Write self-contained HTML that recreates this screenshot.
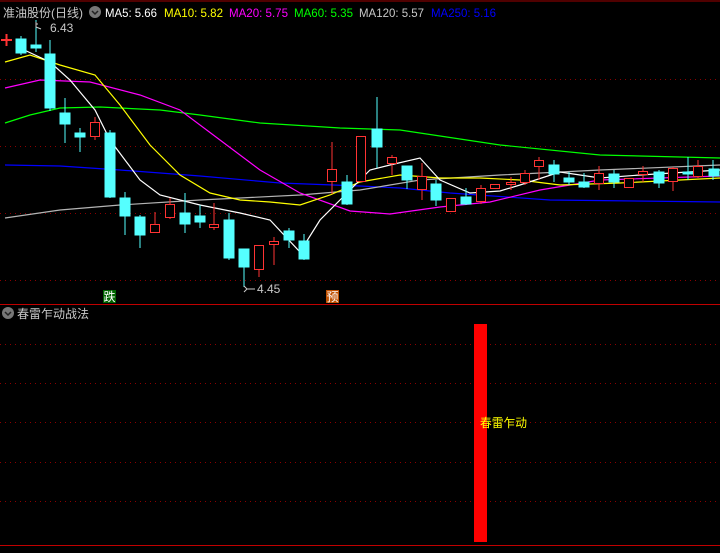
<!DOCTYPE html>
<html><head><meta charset="utf-8"><style>
body{margin:0;background:#000;width:720px;height:548px;overflow:hidden;font-family:"Liberation Sans","Noto Sans CJK SC",sans-serif}
svg text{font-family:"Liberation Sans","Noto Sans CJK SC",sans-serif}
</style></head><body>
<svg width="720" height="548" xmlns="http://www.w3.org/2000/svg">
<rect width="720" height="548" fill="#000"/>
<line x1="0" y1="1" x2="720" y2="1" stroke="#a00000" stroke-width="1"/>
<g stroke="#8b0000" stroke-dasharray="1,4" stroke-width="1">
<line x1="0" y1="79.5" x2="720" y2="79.5"/><line x1="0" y1="146.5" x2="720" y2="146.5"/>
<line x1="0" y1="213.5" x2="720" y2="213.5"/><line x1="0" y1="280.5" x2="720" y2="280.5"/>
<line x1="0" y1="344.5" x2="720" y2="344.5"/><line x1="0" y1="383.5" x2="720" y2="383.5"/>
<line x1="0" y1="422.5" x2="720" y2="422.5"/><line x1="0" y1="462.5" x2="720" y2="462.5"/>
<line x1="0" y1="501.5" x2="720" y2="501.5"/>
</g>
<line x1="0" y1="304.5" x2="720" y2="304.5" stroke="#c00000"/>
<line x1="0" y1="545.5" x2="720" y2="545.5" stroke="#c00000"/>
<!-- header -->
<text x="3" y="17" fill="#c8c8c8" font-size="12" textLength="80" lengthAdjust="spacingAndGlyphs">准油股份(日线)</text>
<circle cx="95" cy="12" r="6" fill="#777"/><path d="M92 11l3 3 3-3" stroke="#222" stroke-width="1.5" fill="none"/>
<text x="105" y="17" font-size="12" fill="#fff" textLength="52" lengthAdjust="spacingAndGlyphs">MA5: 5.66</text>
<text x="164" y="17" font-size="12" fill="#ff0" textLength="59" lengthAdjust="spacingAndGlyphs">MA10: 5.82</text>
<text x="229" y="17" font-size="12" fill="#f0f" textLength="59" lengthAdjust="spacingAndGlyphs">MA20: 5.75</text>
<text x="294" y="17" font-size="12" fill="#0f0" textLength="59" lengthAdjust="spacingAndGlyphs">MA60: 5.35</text>
<text x="359" y="17" font-size="12" fill="#c8c8c8" textLength="65" lengthAdjust="spacingAndGlyphs">MA120: 5.57</text>
<text x="431" y="17" font-size="12" fill="#0000ff" textLength="65" lengthAdjust="spacingAndGlyphs">MA250: 5.16</text>
<!-- red cross -->
<path d="M1 40h11M6.5 34v12" stroke="#f33" stroke-width="2"/>
<!-- MA lines -->
<g fill="none" stroke-width="1.2">
<polyline stroke="#0f0" points="5,123 30,115 60,108 100,107 160,110 200,115 260,123 340,128 400,130 500,145 600,155 720,158"/>
<polyline stroke="#0000ff" points="5,165 60,166 120,170 200,176 280,183 360,186 400,188 450,193 550,200 720,202"/>
<polyline stroke="#b4b4b4" points="5,218 60,210 120,205 200,200 300,195 360,190 420,180 500,175 600,170 720,165"/>
<polyline stroke="#f0f" points="5,88 40,80 90,82 140,95 180,110 220,140 260,170 300,193 350,211 390,214 440,207 490,202 540,190 600,180 720,176"/>
<polyline stroke="#ff0" points="5,62 30,55 60,65 95,75 120,105 150,145 180,175 210,193 240,200 270,202 300,205 330,195 360,182 400,175 440,178 480,178 520,180 560,185 620,183 720,178"/>
<polyline stroke="#fff" points="20,48 50,62 70,80 95,110 110,140 140,180 160,195 200,205 240,213 270,220 300,252 320,220 350,190 370,170 390,165 420,158 440,180 470,193 500,191 520,185 560,172 600,178 640,175 720,170"/>
</g>
<!-- candles -->
<g stroke="#55ffff" fill="#55ffff">
<line x1="21" y1="36" x2="21" y2="55"/><rect x="16" y="39" width="10" height="14"/>
<line x1="36" y1="20" x2="36" y2="52"/><rect x="31" y="45" width="10" height="3"/>
<line x1="50" y1="40" x2="50" y2="111"/><rect x="45" y="54" width="10" height="54"/>
<line x1="65" y1="98" x2="65" y2="143"/><rect x="60" y="113" width="10" height="11"/>
<line x1="80" y1="128" x2="80" y2="152"/><rect x="75" y="133" width="10" height="4"/>
<line x1="110" y1="130" x2="110" y2="198"/><rect x="105" y="133" width="10" height="64"/>
<line x1="125" y1="192" x2="125" y2="235"/><rect x="120" y="198" width="10" height="18"/>
<line x1="140" y1="215" x2="140" y2="248"/><rect x="135" y="217" width="10" height="18"/>
<line x1="185" y1="193" x2="185" y2="233"/><rect x="180" y="213" width="10" height="11"/>
<line x1="200" y1="205" x2="200" y2="228"/><rect x="195" y="216" width="10" height="6"/>
<line x1="229" y1="213" x2="229" y2="260"/><rect x="224" y="220" width="10" height="38"/>
<line x1="244" y1="249" x2="244" y2="287"/><rect x="239" y="249" width="10" height="18"/>
<line x1="289" y1="228" x2="289" y2="248"/><rect x="284" y="231" width="10" height="9"/>
<line x1="304" y1="234" x2="304" y2="260"/><rect x="299" y="241" width="10" height="18"/>
<line x1="347" y1="175" x2="347" y2="205"/><rect x="342" y="182" width="10" height="22"/>
<line x1="377" y1="97" x2="377" y2="168"/><rect x="372" y="129" width="10" height="18"/>
<line x1="407" y1="166" x2="407" y2="189"/><rect x="402" y="166" width="10" height="14"/>
<line x1="436" y1="180" x2="436" y2="206"/><rect x="431" y="184" width="10" height="16"/>
<line x1="466" y1="188" x2="466" y2="205"/><rect x="461" y="197" width="10" height="7"/>
<line x1="554" y1="160" x2="554" y2="182"/><rect x="549" y="165" width="10" height="9"/>
<line x1="569" y1="172" x2="569" y2="185"/><rect x="564" y="178" width="10" height="4"/>
<line x1="584" y1="173" x2="584" y2="188"/><rect x="579" y="182" width="10" height="5"/>
<line x1="614" y1="170" x2="614" y2="188"/><rect x="609" y="174" width="10" height="8"/>
<line x1="659" y1="170" x2="659" y2="188"/><rect x="654" y="172" width="10" height="11"/>
<line x1="688" y1="157" x2="688" y2="180"/><rect x="683" y="172" width="10" height="2"/>
<line x1="713" y1="160" x2="713" y2="180"/><rect x="709" y="169" width="10" height="7"/>
</g>
<g stroke="#ff3333" fill="none">
<line x1="95" y1="117" x2="95" y2="140"/><rect x="90.5" y="122.5" width="9" height="14" fill="#000"/>
<line x1="155" y1="212" x2="155" y2="233"/><rect x="150.5" y="224.5" width="9" height="8" fill="#000"/>
<line x1="170" y1="198" x2="170" y2="219"/><rect x="165.5" y="204.5" width="9" height="13" fill="#000"/>
<line x1="214" y1="203" x2="214" y2="230"/><rect x="209.5" y="224.5" width="9" height="3" fill="#000"/>
<line x1="259" y1="245" x2="259" y2="277"/><rect x="254.5" y="245.5" width="9" height="24" fill="#000"/>
<line x1="274" y1="237" x2="274" y2="265"/><rect x="269.5" y="241.5" width="9" height="3" fill="#000"/>
<line x1="332" y1="142" x2="332" y2="194"/><rect x="327.5" y="169.5" width="9" height="12" fill="#000"/>
<rect x="356.5" y="136.5" width="9" height="45" fill="#000"/>
<line x1="392" y1="155" x2="392" y2="175"/><rect x="387.5" y="157.5" width="9" height="6" fill="#000"/>
<line x1="422" y1="163" x2="422" y2="200"/><rect x="417.5" y="176.5" width="9" height="13" fill="#000"/>
<line x1="451" y1="198" x2="451" y2="212"/><rect x="446.5" y="198.5" width="9" height="13" fill="#000"/>
<line x1="481" y1="185" x2="481" y2="204"/><rect x="476.5" y="188.5" width="9" height="13" fill="#000"/>
<rect x="490.5" y="184.5" width="9" height="4" fill="#000"/>
<line x1="511" y1="177" x2="511" y2="190"/><rect x="506.5" y="182.5" width="9" height="2" fill="#000"/>
<line x1="525" y1="170" x2="525" y2="185"/><rect x="520.5" y="173.5" width="9" height="9" fill="#000"/>
<line x1="539" y1="157" x2="539" y2="180"/><rect x="534.5" y="160.5" width="9" height="6" fill="#000"/>
<line x1="599" y1="166" x2="599" y2="190"/><rect x="594.5" y="173.5" width="9" height="10" fill="#000"/>
<rect x="624.5" y="178.5" width="9" height="9" fill="#000"/>
<line x1="643" y1="166" x2="643" y2="182"/><rect x="638.5" y="171.5" width="9" height="3" fill="#000"/>
<line x1="673" y1="167" x2="673" y2="191"/><rect x="668.5" y="168.5" width="9" height="13" fill="#000"/>
<line x1="698" y1="160" x2="698" y2="178"/><rect x="693.5" y="166.5" width="9" height="10" fill="#000"/>
</g>
<!-- labels -->
<path d="M38 24l-2 0M36 22v5l5 2" stroke="#ccc" fill="none"/>
<text x="50" y="32" font-size="12" fill="#c8c8c8">6.43</text>
<path d="M247 289h8M244 286l3 3-3 3" stroke="#ccc" fill="none"/>
<text x="257" y="293" font-size="12" fill="#c8c8c8">4.45</text>
<rect x="103" y="290" width="13" height="13" fill="#006400"/>
<text x="103.5" y="301" font-size="12" fill="#fff">跌</text>
<rect x="326" y="290" width="13" height="13" fill="#c05000"/>
<text x="326.5" y="301" font-size="12" fill="#fff">预</text>
<!-- sub panel -->
<circle cx="8" cy="313" r="6" fill="#777"/><path d="M5 312l3 3 3-3" stroke="#222" stroke-width="1.5" fill="none"/>
<text x="17" y="318" font-size="12" fill="#c8c8c8" textLength="72" lengthAdjust="spacingAndGlyphs">春雷乍动战法</text>
<rect x="474" y="324" width="13" height="218" fill="#f00"/>
<text x="480" y="427" font-size="12" fill="#ff0" textLength="47" lengthAdjust="spacingAndGlyphs">春雷乍动</text>
</svg>
</body></html>
